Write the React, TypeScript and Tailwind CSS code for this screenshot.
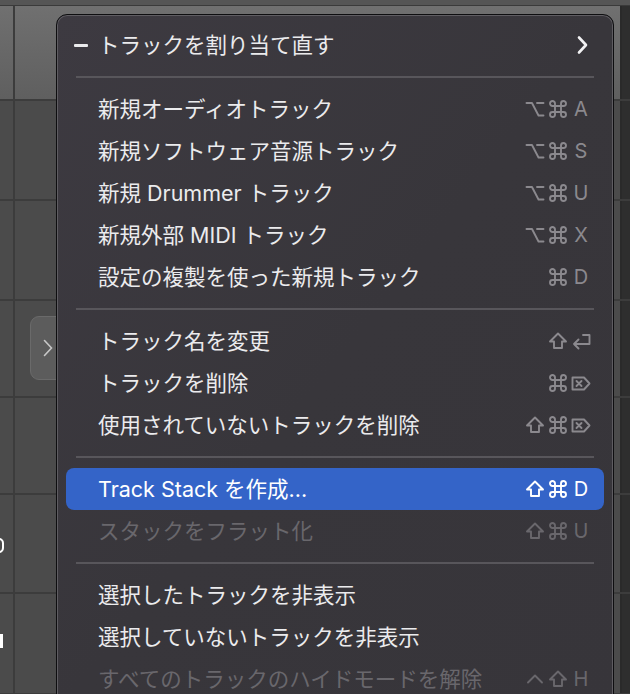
import React from "react";

type Key = "opt" | "cmd" | "shift" | "ret" | "del" | "ctrl" | string;

type Item = {
  label: string;
  keys?: Key[];
  disabled?: boolean;
  active?: boolean;
  dash?: boolean;
  submenu?: boolean;
};

const sections: Item[][] = [
  [{ label: "トラックを割り当て直す", dash: true, submenu: true }],
  [
    { label: "新規オーディオトラック", keys: ["opt", "cmd", "A"] },
    { label: "新規ソフトウェア音源トラック", keys: ["opt", "cmd", "S"] },
    { label: "新規 Drummer トラック", keys: ["opt", "cmd", "U"] },
    { label: "新規外部 MIDI トラック", keys: ["opt", "cmd", "X"] },
    { label: "設定の複製を使った新規トラック", keys: ["cmd", "D"] },
  ],
  [
    { label: "トラック名を変更", keys: ["shift", "ret"] },
    { label: "トラックを削除", keys: ["cmd", "del"] },
    { label: "使用されていないトラックを削除", keys: ["shift", "cmd", "del"] },
  ],
  [
    { label: "Track Stack を作成...", keys: ["shift", "cmd", "D"], active: true },
    { label: "スタックをフラット化", keys: ["shift", "cmd", "U"], disabled: true },
  ],
  [
    { label: "選択したトラックを非表示" },
    { label: "選択していないトラックを非表示" },
    { label: "すべてのトラックのハイドモードを解除", keys: ["ctrl", "shift", "H"], disabled: true },
  ],
];

const glyphs: Record<string, string> = {
  opt: "M1.5 4H7L13.5 16.5H18.5M12 4H18.5",
  cmd: "M7 4.5V15.5A2.5 2.5 0 1 1 4.5 13H15.5A2.5 2.5 0 1 1 13 15.5V4.5A2.5 2.5 0 1 1 15.5 7H4.5A2.5 2.5 0 1 1 7 4.5Z",
  shift: "M10 2.5L18 10.5H14V17H6V10.5H2Z",
  ret: "M12 4H18.5V13H3M7.5 8.5L3 13L7.5 17.5",
  del: "M1.5 4.5H13L18.5 10.5L13 16.5H1.5ZM5.5 8L10.5 13M10.5 8L5.5 13",
  ctrl: "M3 13.5L10 6.5L17 13.5",
};

function KeyCap({ k }: { k: Key }) {
  const d = glyphs[k];
  return (
    <div className="flex h-[20px] w-[20px] items-center justify-center">
      {d ? (
        <svg width="20" height="20" viewBox="0 0 20 20" fill="none" stroke="currentColor" strokeWidth="1.9" strokeLinejoin="round" strokeLinecap="round">
          <path d={d} />
        </svg>
      ) : (
        <span className="text-[20px] leading-none">{k}</span>
      )}
    </div>
  );
}

function Row({ item }: { item: Item }) {
  const text = item.active
    ? "text-white"
    : item.disabled
      ? "text-[#69676c]"
      : "text-[#ebebed]";
  const keyColor = item.active
    ? "text-white"
    : item.disabled
      ? "text-[#69676c]"
      : "text-[#8b898e]";
  return (
    <div
      className={`flex h-[42px] items-center rounded-[8px] pr-[13px] ${
        item.active ? "bg-[#3464c8]" : ""
      }`}
    >
      <div className="flex w-[32px] shrink-0 items-center pl-[8px]">
        {item.dash && <div className="h-[3px] w-[14px] rounded-[1px] bg-[#ebebed]" />}
      </div>
      <div className={`flex-1 whitespace-nowrap text-[21.5px] leading-[42px] ${text}`}>
        {item.label}
      </div>
      {item.keys && (
        <div className={`flex items-center gap-[3px] ${keyColor}`}>
          {item.keys.map((k, i) => (
            <KeyCap key={i} k={k} />
          ))}
        </div>
      )}
      {item.submenu && (
        <svg width="14" height="20" viewBox="0 0 14 20" fill="none" stroke="#f2f2f4" strokeWidth="2.6" strokeLinecap="round" strokeLinejoin="round" className="mr-[2px]">
          <path d="M4 2.5L11 10L4 17.5" />
        </svg>
      )}
    </div>
  );
}

const rowHeights = [95, 100, 100, 97, 97, 99, 101];

export default function App() {
  return (
    <div
      className="relative h-[694px] w-[630px] overflow-hidden bg-[#4b4b4b]"
      style={{ fontFamily: 'Inter, "Noto Sans CJK JP", sans-serif' }}
    >
      {/* track grid behind the menu */}
      <div className="flex h-[5px] bg-[#555555]" />
      <div className="flex flex-col border-t border-[#3a3a3a]">
        {rowHeights.map((h, i) => (
          <div
            key={i}
            className={`flex border-b-2 border-[#3c3c3c] ${
              i === 0 ? "bg-gradient-to-b from-[#707070] to-[#5f5f5f]" : ""
            }`}
            style={{ height: h }}
          >
            <div className="relative w-[13px]">
              {i === 5 && (
                <div className="absolute left-[-6px] top-[43px] h-[15px] w-[10px] rounded-full border-[2.5px] border-white" />
              )}
              {i === 6 && <div className="absolute left-0 top-[40px] h-[14px] w-[3px] bg-white" />}
            </div>
            <div className="w-[2px] bg-[#3c3c3c]" />
            <div className="flex-1" />
            <div className="w-[2px] bg-[#2a2a2a]" />
            <div className="w-[8px] bg-[#2e2e2e]" />
          </div>
        ))}
      </div>

      {/* collapsed inspector tab */}
      <div className="absolute left-[30px] top-[316px] flex h-[64px] w-[30px] items-center rounded-l-[9px] border border-[#6a6a6a] bg-[#5c5c5c] pl-[12px]">
        <svg width="10" height="18" viewBox="0 0 10 18" fill="none" stroke="#c8c8c8" strokeWidth="1.6" strokeLinecap="round">
          <path d="M1.5 1.5L8.5 9L1.5 16.5" />
        </svg>
      </div>

      {/* context menu */}
      <div className="absolute left-[56px] top-[14px] h-[700px] w-[558px] rounded-[11px] border border-[#0e0e10] bg-gradient-to-br from-[#3d3a41] via-[#38363b] to-[#37353a] px-[9px] pt-[9px] shadow-[inset_0_0_0_1px_#5f5d62]">
        {sections.map((sec, si) => (
          <div key={si}>
            {si > 0 && (
              <div className="flex h-[22px] items-center px-[10px]">
                <div className="h-[2px] w-full bg-[#58565b]" />
              </div>
            )}
            {sec.map((item) => (
              <Row key={item.label} item={item} />
            ))}
          </div>
        ))}
      </div>
    </div>
  );
}
